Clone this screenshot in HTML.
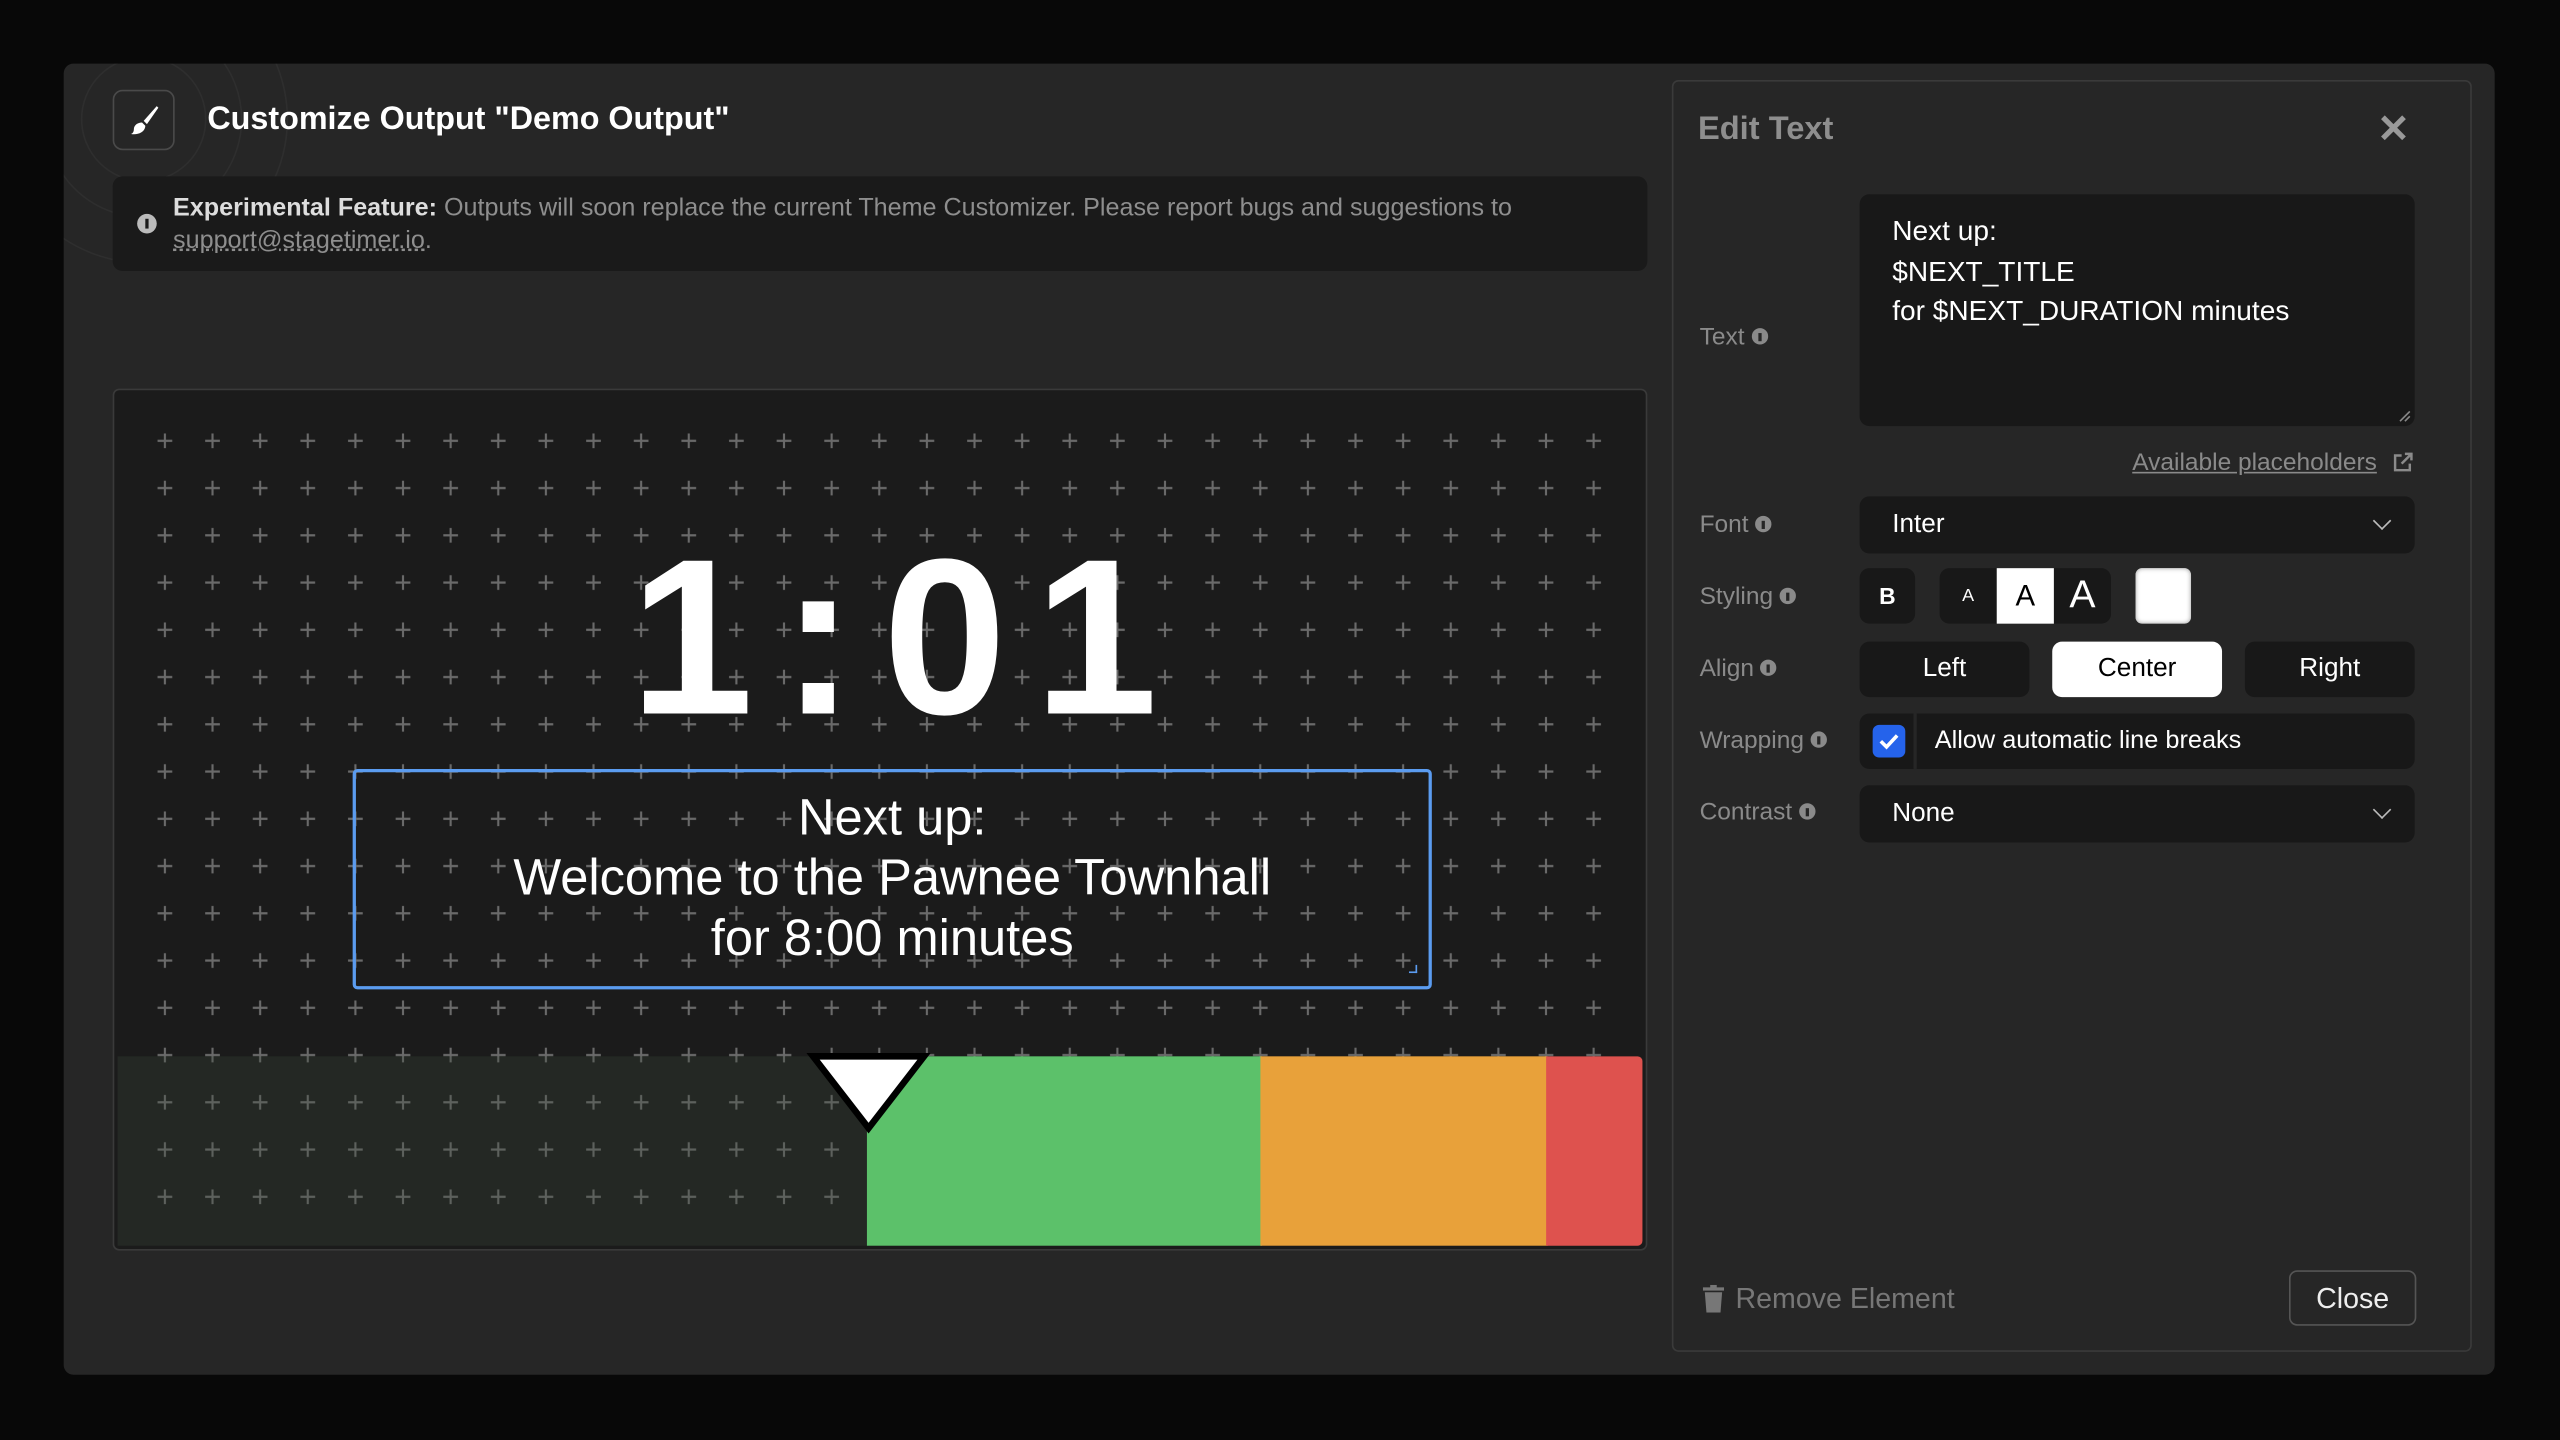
<!DOCTYPE html>
<html><head><meta charset="utf-8"><style>
*{box-sizing:border-box;margin:0;padding:0}
html,body{width:2560px;height:1440px;overflow:hidden;background:#080808}
#s{position:absolute;left:0;top:0;width:1568px;height:882px;transform:scale(1.6326531);transform-origin:0 0;font-family:"Liberation Sans",sans-serif}
.a{position:absolute}
.modal{left:39px;top:39px;width:1489px;height:803px;background:#262626;border-radius:6px;overflow:hidden}
.lbl{position:absolute;left:1041px;font-size:15px;color:#8a8a8a}
.lbl i{display:inline-block;width:10px;height:10px;border-radius:50%;background:#8a8a8a;margin-left:4px;vertical-align:0px;position:relative}
.lbl i:after{content:"";position:absolute;left:4px;top:3px;width:2px;height:5px;background:#262626}
.box{position:absolute;background:#181818;border-radius:6px;color:#fff;font-size:16px}
.chev{position:absolute;right:16px;top:11px;width:8px;height:8px;border-right:1.5px solid #bbb;border-bottom:1.5px solid #bbb;transform:rotate(45deg)}
</style></head><body><div id="s">
<div class="a modal">
 <svg class="a" style="left:0;top:0" width="200" height="200"><g fill="none" stroke="#2e2e2e" stroke-width="1"><circle cx="49" cy="34" r="38"/><circle cx="49" cy="34" r="60"/><circle cx="49" cy="34" r="88"/></g></svg>
</div>
<div class="a" style="left:69px;top:55px;width:38px;height:37px;border:1px solid #4a4a4a;border-radius:6px;background:#262626"></div>
<svg class="a" style="left:77px;top:62px" width="22" height="22" viewBox="0 0 22 22"><path d="M19 3 L11 12 L13 14 L20 4 Z" fill="#fff"/><path d="M10 13 C7 13 5 15 5 17 C5 19 4 20 3 20 C7 21 12 19 12 15 Z" fill="#fff"/></svg>
<div class="a" style="left:127px;top:62px;font-size:19.8px;font-weight:bold;color:#fff">Customize Output "Demo Output"</div>
<div class="a" style="left:69px;top:108px;width:940px;height:58px;background:#1a1a1a;border-radius:6px"></div>
<div class="a" style="left:84px;top:131px;width:12px;height:12px;border-radius:50%;background:#bbb"></div>
<div class="a" style="left:89px;top:134px;width:2px;height:6px;background:#1a1a1a"></div>
<div class="a" style="left:106px;top:118px;font-size:15.4px;line-height:20px;color:#8e8e8e;width:900px">
<b style="color:#ddd">Experimental Feature:</b> Outputs will soon replace the current Theme Customizer. Please report bugs and suggestions to<br><span style="text-decoration:underline dotted">support@stagetimer.io</span>.</div>

<div class="a" style="left:69px;top:238px;width:940px;height:528px;border:1px solid #3a3a3a;border-radius:4px;background:#1b1b1b;overflow:hidden">
 <svg class="a" style="left:0;top:0" width="938" height="526"><defs><pattern id="p" patternUnits="userSpaceOnUse" x="16.42" y="16.53" width="29.17" height="28.94"><path d="M14.58 10 V19 M10.08 14.47 H19.08" stroke="#6a6a6a" stroke-width="1.3"/></pattern></defs><rect x="16.42" y="16.53" width="904.3" height="492" fill="url(#p)"/></svg>
 <div class="a" style="left:2px;top:408px;width:460px;height:116px;background:rgba(60,75,60,0.28)"></div>
 <div class="a" style="left:461px;top:408px;width:242px;height:116px;background:#5cc16a"></div>
 <div class="a" style="left:702px;top:408px;width:176px;height:116px;background:#e8a13a"></div>
 <div class="a" style="left:877px;top:408px;width:59px;height:116px;background:#de524e;border-radius:0 3px 3px 0"></div>
 <svg class="a" style="left:424px;top:406px" width="76" height="50"><path d="M4 2 L72 2 L38 46 Z" fill="#fff" stroke="#000" stroke-width="4" stroke-linejoin="miter"/></svg>
 <div class="a" style="left:0;top:76px;width:938px;text-align:center;font-size:136px;font-weight:bold;color:#fff;letter-spacing:17px;padding-left:34px;line-height:150px">1:01</div>
 <div class="a" style="left:146px;top:232px;width:661px;height:135px;border:2px solid #5b9cf0;border-radius:3px"></div>
 <div class="a" style="left:793px;top:352px;width:5px;height:5px;border-right:1.5px solid #5b9cf0;border-bottom:1.5px solid #5b9cf0"></div>
 <div class="a" style="left:146px;top:243px;width:661px;text-align:center;color:#fff;font-size:31px;line-height:37px">Next up:<br>Welcome to the Pawnee Townhall<br>for 8:00 minutes</div>
</div>

<div class="a" style="left:1024px;top:49px;width:490px;height:779px;border:1px solid #3a3a3a;border-radius:4px;background:#262626"></div>
<div class="a" style="left:1040px;top:68px;font-size:20px;font-weight:bold;color:#8e8e8e">Edit Text</div>
<div class="a" style="left:1456px;top:65px;font-size:24px;font-weight:bold;color:#999">✕</div>
<div class="lbl" style="top:198px">Text<i></i></div>
<div class="lbl" style="top:313px">Font<i></i></div>
<div class="lbl" style="top:357px">Styling<i></i></div>
<div class="lbl" style="top:401px">Align<i></i></div>
<div class="lbl" style="top:445px">Wrapping<i></i></div>
<div class="lbl" style="top:489px">Contrast<i></i></div>
<div class="box" style="left:1139px;top:119px;width:340px;height:142px;padding:10px 20px;font-size:17.2px;line-height:24.5px">Next up:<br>$NEXT_TITLE<br>for $NEXT_DURATION minutes
<svg class="a" style="right:2px;bottom:2px" width="8" height="8"><path d="M1 7 L7 1 M4 7 L7 4" stroke="#888" stroke-width="1"/></svg></div>
<div class="a" style="left:1306px;top:275px;font-size:15px;color:#8a8a8a;text-decoration:underline">Available placeholders</div>
<svg class="a" style="left:1465px;top:277px" width="13" height="13" viewBox="0 0 13 13"><path d="M6 2H2V11H11V7M8 1H12V5M12 1L6 7" fill="none" stroke="#8a8a8a" stroke-width="1.5"/></svg>
<div class="box" style="left:1139px;top:304px;width:340px;height:35px;padding:9px 20px">Inter<span class="chev"></span></div>
<div class="box" style="left:1139px;top:348px;width:34px;height:34px;text-align:center;line-height:34px;font-weight:bold;font-size:14px">B</div>
<div class="box" style="left:1188px;top:348px;width:105px;height:34px"></div>
<div class="a" style="left:1188px;top:348px;width:35px;height:34px;text-align:center;line-height:34px;color:#fff;font-size:11px">A</div>
<div class="a" style="left:1223px;top:348px;width:35px;height:34px;background:#fff;text-align:center;line-height:34px;color:#000;font-size:18px">A</div>
<div class="a" style="left:1258px;top:348px;width:35px;height:34px;text-align:center;line-height:34px;color:#fff;font-size:24px">A</div>
<div class="a" style="left:1308px;top:348px;width:34px;height:34px;background:#fff;border-radius:4px;box-shadow:inset 0 0 3px #999"></div>
<div class="box" style="left:1139px;top:393px;width:104px;height:34px;text-align:center;line-height:34px">Left</div>
<div class="box" style="left:1257px;top:393px;width:104px;height:34px;text-align:center;line-height:34px;background:#fff;color:#000">Center</div>
<div class="box" style="left:1375px;top:393px;width:104px;height:34px;text-align:center;line-height:34px">Right</div>
<div class="box" style="left:1139px;top:437px;width:340px;height:34px;line-height:34px;padding-left:46px;font-size:15.5px">Allow automatic line breaks</div>
<div class="a" style="left:1172px;top:437px;width:2px;height:34px;background:#262626"></div>
<div class="a" style="left:1147px;top:444px;width:20px;height:20px;background:#2563eb;border-radius:4px"></div>
<svg class="a" style="left:1147px;top:444px" width="20" height="20"><path d="M5 10 L8.5 13.5 L15 6.5" fill="none" stroke="#fff" stroke-width="2.2"/></svg>
<div class="box" style="left:1139px;top:481px;width:340px;height:35px;padding:9px 20px">None<span class="chev"></span></div>
<svg class="a" style="left:1043px;top:787px" width="13" height="17" viewBox="0 0 13 17"><rect x="0" y="1.5" width="13" height="2" fill="#777"/><rect x="4.5" y="0" width="4" height="2" fill="#777"/><path d="M1.2 4.5H11.8L10.8 17H2.2Z" fill="#777"/></svg>
<div class="a" style="left:1063px;top:785px;font-size:17.5px;color:#777">Remove Element</div>
<div class="a" style="left:1402px;top:778px;width:78px;height:34px;border:1px solid #555;border-radius:5px;color:#eee;font-size:17.5px;text-align:center;line-height:32px">Close</div>
</div></body></html>
